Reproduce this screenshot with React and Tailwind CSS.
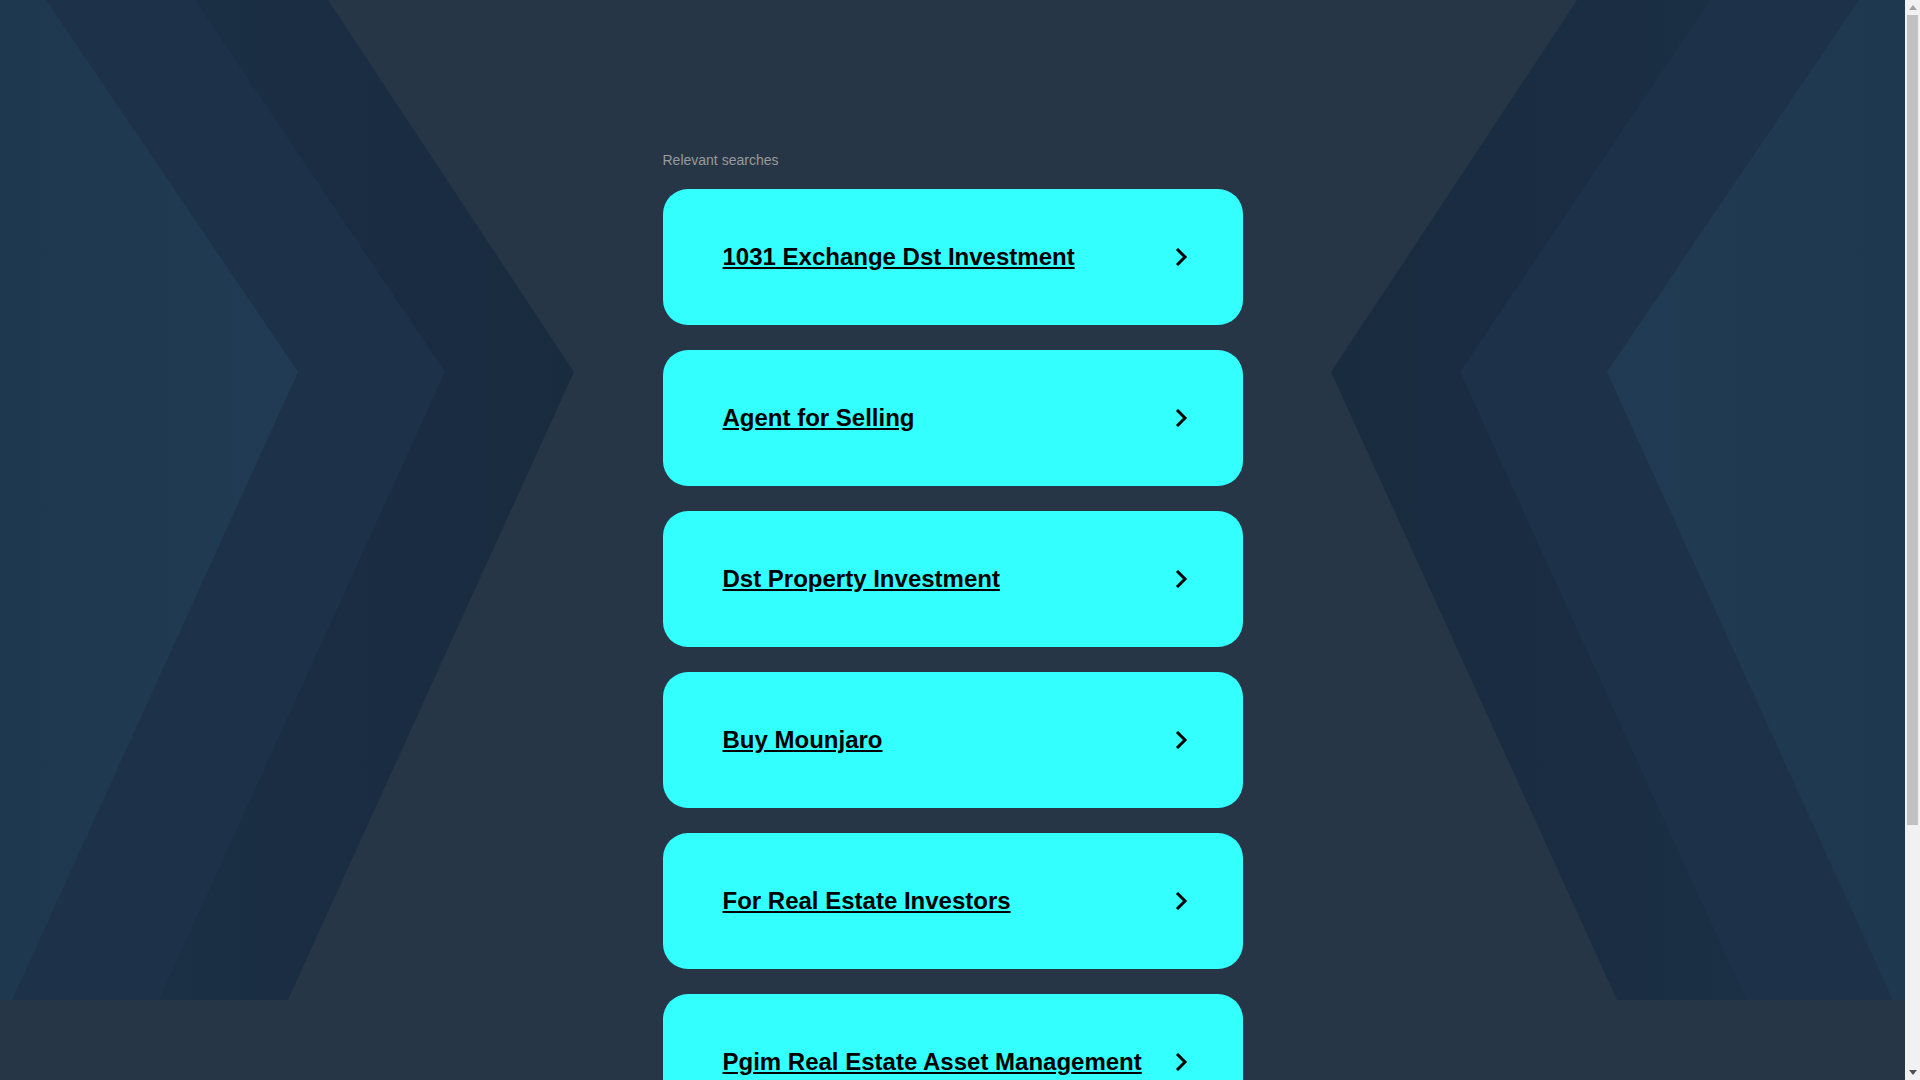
const searches = [
  "1031 Exchange Dst Investment",
  "Agent for Selling",
  "Dst Property Investment",
  "Buy Mounjaro",
  "For Real Estate Investors",
  "Pgim Real Estate Asset Management",
];

// chevron bands behind the list, mirrored around the page centre
function Backdrop() {
  const W = 1905;
  const m = (pts) => pts.map(([x, y]) => `${W - x},${y}`).join(" ");
  const p = (pts) => pts.map(([x, y]) => `${x},${y}`).join(" ");
  const outer = [[0, 0], [328, 0], [574, 372], [288, 1000], [0, 1000]];
  const middle = [[0, 0], [195, 0], [445, 372], [159, 1000], [0, 1000]];
  const inner = [[0, 0], [46, 0], [298, 372], [12, 1000], [0, 1000]];
  return (
    <svg
      className="absolute left-0 top-0 w-full h-[1000px]"
      viewBox="0 0 1905 1000"
      preserveAspectRatio="none"
    >
      <defs>
        <linearGradient id="outL" x1="0" x2="1" y1="0" y2="0">
          <stop offset="0" stopColor="#1c3047" />
          <stop offset="1" stopColor="#182b3f" />
        </linearGradient>
        <linearGradient id="outR" x1="1" x2="0" y1="0" y2="0">
          <stop offset="0" stopColor="#1c3047" />
          <stop offset="1" stopColor="#182b3f" />
        </linearGradient>
        <linearGradient id="inL" x1="0" x2="1" y1="0" y2="0">
          <stop offset="0" stopColor="#1e384f" />
          <stop offset="1" stopColor="#203b53" />
        </linearGradient>
        <linearGradient id="inR" x1="1" x2="0" y1="0" y2="0">
          <stop offset="0" stopColor="#1e384f" />
          <stop offset="1" stopColor="#203b53" />
        </linearGradient>
      </defs>
      <polygon points={p(outer)} fill="url(#outL)" />
      <polygon points={p(middle)} fill="#1d3249" />
      <polygon points={p(inner)} fill="url(#inL)" />
      <polygon points={m(outer)} fill="url(#outR)" />
      <polygon points={m(middle)} fill="#1d3249" />
      <polygon points={m(inner)} fill="url(#inR)" />
    </svg>
  );
}

function Chevron() {
  return (
    <svg width="14" height="20" viewBox="0 0 14 20" className="shrink-0">
      <polyline
        points="3,2 11,10 3,18"
        fill="none"
        stroke="#000"
        strokeWidth="3"
        strokeLinejoin="miter"
      />
    </svg>
  );
}

// the page's classic scrollbar
function Scrollbar() {
  return (
    <aside className="w-[15px] shrink-0 h-screen bg-[#f1f1f1] flex flex-col">
      <div className="h-[15px] flex items-center justify-center">
        <svg width="8" height="5" viewBox="0 0 8 5">
          <polygon points="0,5 4,0 8,5" fill="#a3a3a3" />
        </svg>
      </div>
      <div className="flex-1 px-[2px]">
        <div className="h-[810px] bg-[#c1c1c1]" />
      </div>
      <div className="h-[15px] flex items-center justify-center">
        <svg width="8" height="5" viewBox="0 0 8 5">
          <polygon points="0,0 8,0 4,5" fill="#505050" />
        </svg>
      </div>
    </aside>
  );
}

export default function App() {
  return (
    <div className="flex h-screen overflow-hidden bg-[#273646] font-['Liberation_Sans',Arial,sans-serif]">
      <main className="relative flex-1 overflow-hidden">
        <Backdrop />
        <div className="relative w-[580px] mx-auto pt-[152px] pb-[60px]">
          <p className="text-[14px] leading-4 text-[#9a9a9a] mb-[21px]">Relevant searches</p>
          {searches.map((s) => (
            <a
              key={s}
              href="#"
              className="flex items-center justify-between h-[136px] mb-[25px] pl-[60px] pr-[55px] rounded-[25px] bg-[#33ffff]"
            >
              <span className="text-[24px] font-bold text-black underline">{s}</span>
              <Chevron />
            </a>
          ))}
        </div>
      </main>
      <Scrollbar />
    </div>
  );
}
